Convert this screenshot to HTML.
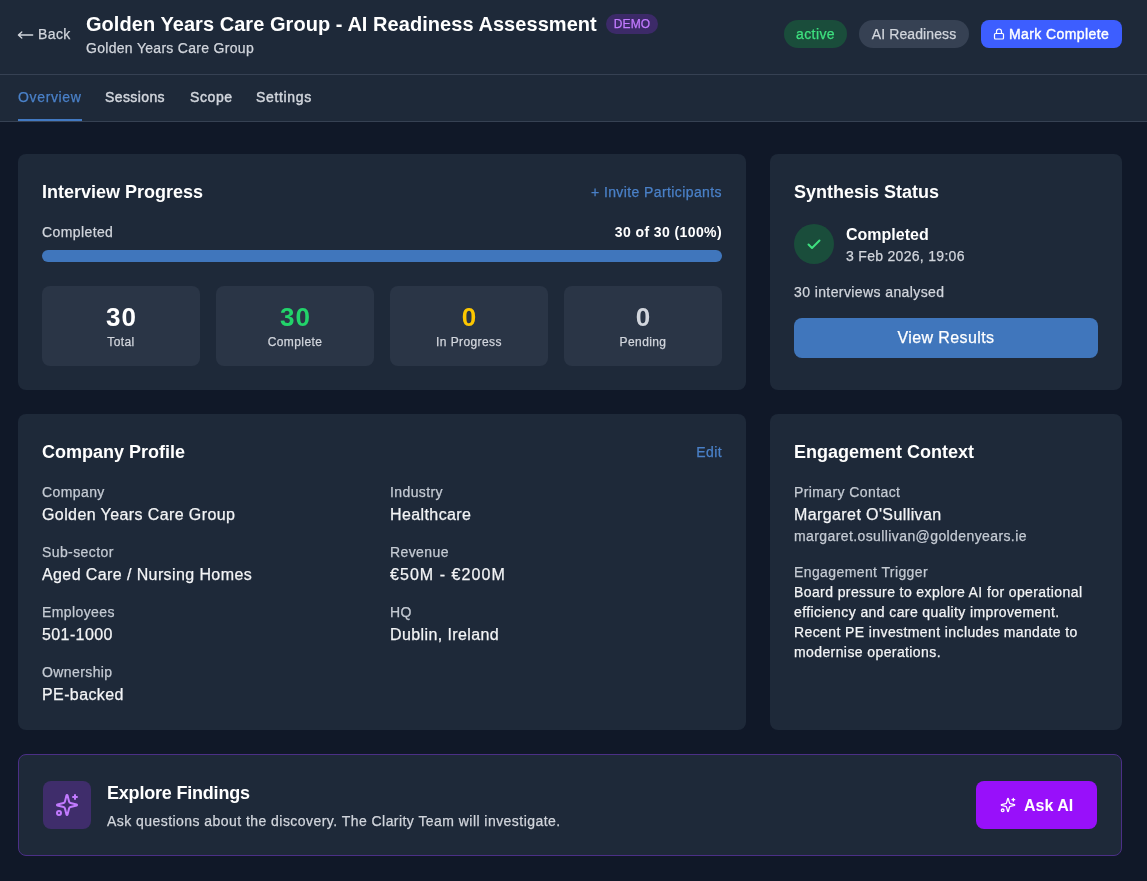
<!DOCTYPE html>
<html><head><meta charset="utf-8">
<style>
*{box-sizing:border-box;margin:0;padding:0}
html,body{width:1147px;height:881px;overflow:hidden;background:#101828;font-family:"Liberation Sans",sans-serif;color:#fff;letter-spacing:0.4px}
.b{font-weight:bold;letter-spacing:0}
.b0{-webkit-text-stroke-width:0}
.abs{position:absolute}
.hdr{position:absolute;left:0;top:0;width:1147px;height:75px;background:#1e2939;border-bottom:1px solid #364153}
.tabs{position:absolute;left:0;top:75px;width:1147px;height:47px;background:#1e2939;border-bottom:1px solid #364153}
.t{position:absolute;white-space:nowrap}
.card{position:absolute;background:#1e2939;border-radius:8px}
.stat{position:absolute;top:286px;width:158px;height:80px;background:#2a3546;border-radius:8px;text-align:center}
.stat .n{position:absolute;left:0;right:0;top:15px;font-size:26px;line-height:32px;font-weight:bold;letter-spacing:1px;text-indent:1px;-webkit-text-stroke-width:0}
.stat .l{position:absolute;left:0;right:0;top:48px;font-size:12px;line-height:16px;color:#d1d5dc}
.h2{font-size:18px;line-height:28px;font-weight:bold;color:#fff;letter-spacing:0}
.lab{font-size:14px;line-height:20px;color:#c4cad3}
.val{font-size:16px;line-height:24px;color:#f3f4f6}
body{filter:grayscale(0.001)}
body{-webkit-text-stroke-width:0.25px}
.h2{-webkit-text-stroke-width:0}
</style></head><body>
<div class="hdr">
  <svg class="abs" style="left:17px;top:30px" width="18" height="10" viewBox="0 0 18 10"><path d="M1.6 5H15.7M4.8 1.9L1.4 5l3.4 3.1" fill="none" stroke="#d1d5dc" stroke-width="1.3" stroke-linecap="round" stroke-linejoin="round"/></svg>
  <div class="t" style="left:38px;top:24px;font-size:14px;line-height:20px;color:#d1d5dc">Back</div>
  <div class="t" style="left:86px;top:10px;font-size:20px;line-height:28px;font-weight:bold;letter-spacing:0.05px;-webkit-text-stroke-width:0">Golden Years Care Group - AI Readiness Assessment</div>
  <div class="abs" style="left:606px;top:14px;width:52px;height:20px;border-radius:10px;background:#3c2a68;color:#c27aff;font-size:12px;line-height:20px;text-align:center;letter-spacing:0.1px">DEMO</div>
  <div class="t" style="left:86px;top:38px;font-size:14px;line-height:20px;color:#d1d5dc;letter-spacing:0.3px">Golden Years Care Group</div>
  <div class="abs" style="left:784px;top:20px;width:63px;height:28px;border-radius:14px;background:#1a4d3b;color:#3ee07f;font-size:14px;line-height:28px;text-align:center">active</div>
  <div class="abs" style="left:859px;top:20px;width:110px;height:28px;border-radius:14px;background:#364153;color:#d1d5dc;font-size:14px;line-height:28px;text-align:center;letter-spacing:0.1px">AI Readiness</div>
  <div class="abs" style="left:981px;top:20px;width:141px;height:28px;border-radius:8px;background:#3d5eff;color:#fff;font-size:14px;line-height:28px;text-align:center">
    <svg style="position:absolute;left:12px;top:8px" width="12" height="12" viewBox="0 0 12 12"><rect x="1.5" y="5.5" width="9" height="5.5" rx="1" fill="none" stroke="#fff" stroke-width="1.2"/><path d="M3.5 5.5V3.5a2.5 2.5 0 0 1 5 0v2" fill="none" stroke="#fff" stroke-width="1.2"/></svg>
    <span style="position:absolute;left:28px;top:0;-webkit-text-stroke-width:0.4px;letter-spacing:0.4px">Mark Complete</span>
  </div>
</div>
<div class="tabs">
  <div class="t" style="left:18px;top:12px;font-size:14px;line-height:20px;color:#4a80c8;letter-spacing:0.65px">Overview</div>
  <div class="abs" style="left:18px;top:44px;width:64px;height:2px;background:#4279c2"></div>
  <div class="t" style="left:105px;top:12px;font-size:14px;line-height:20px;color:#d1d5dc;-webkit-text-stroke-width:0.45px">Sessions</div>
  <div class="t" style="left:190px;top:12px;font-size:14px;line-height:20px;color:#d1d5dc;-webkit-text-stroke-width:0.45px;letter-spacing:0.6px">Scope</div>
  <div class="t" style="left:256px;top:12px;font-size:14px;line-height:20px;color:#d1d5dc;-webkit-text-stroke-width:0.45px;letter-spacing:0.65px">Settings</div>
</div>

<!-- Interview progress -->
<div class="card" style="left:18px;top:154px;width:728px;height:236px"></div>
<div class="t h2" style="left:42px;top:178px">Interview Progress</div>
<div class="t" style="right:425px;top:182px;font-size:14px;line-height:20px;color:#4a80c8">+ Invite Participants</div>
<div class="t" style="left:42px;top:222px;font-size:14px;line-height:20px;color:#d1d5dc">Completed</div>
<div class="t" style="right:425px;top:222px;font-size:14px;line-height:20px;color:#fff;font-weight:bold;letter-spacing:0.4px;-webkit-text-stroke-width:0">30 of 30 (100%)</div>
<div class="abs" style="left:42px;top:250px;width:680px;height:12px;border-radius:6px;background:#4076bc"></div>
<div class="stat" style="left:42px"><div class="n">30</div><div class="l">Total</div></div>
<div class="stat" style="left:216px"><div class="n" style="color:#22d36a">30</div><div class="l">Complete</div></div>
<div class="stat" style="left:390px"><div class="n" style="color:#fdc700">0</div><div class="l">In Progress</div></div>
<div class="stat" style="left:564px"><div class="n" style="color:#d1d5dc">0</div><div class="l">Pending</div></div>

<!-- Synthesis -->
<div class="card" style="left:770px;top:154px;width:352px;height:236px"></div>
<div class="t h2" style="left:794px;top:178px">Synthesis Status</div>
<div class="abs" style="left:794px;top:224px;width:40px;height:40px;border-radius:20px;background:#1a4d3b"></div>
<svg class="abs" style="left:806px;top:236px" width="16" height="16" viewBox="0 0 16 16"><path d="M2.5 8.5l3.5 3.5 7.5-7.5" fill="none" stroke="#3ee07f" stroke-width="2" stroke-linecap="round" stroke-linejoin="round"/></svg>
<div class="t" style="left:846px;top:223px;font-size:16px;line-height:24px;font-weight:bold;letter-spacing:0;-webkit-text-stroke-width:0">Completed</div>
<div class="t" style="left:846px;top:246px;font-size:14px;line-height:20px;color:#d1d5dc;letter-spacing:0.3px">3 Feb 2026, 19:06</div>
<div class="t" style="left:794px;top:282px;font-size:14px;line-height:20px;color:#d1d5dc">30 interviews analysed</div>
<div class="abs" style="left:794px;top:318px;width:304px;height:40px;border-radius:8px;background:#4076bc;color:#fff;font-size:16px;line-height:40px;text-align:center">View Results</div>

<!-- Company profile -->
<div class="card" style="left:18px;top:414px;width:728px;height:316px"></div>
<div class="t h2" style="left:42px;top:438px">Company Profile</div>
<div class="t" style="right:425px;top:442px;font-size:14px;line-height:20px;color:#4a80c8">Edit</div>
<div class="t lab" style="left:42px;top:482px">Company</div>
<div class="t val" style="left:42px;top:503px">Golden Years Care Group</div>
<div class="t lab" style="left:390px;top:482px">Industry</div>
<div class="t val" style="left:390px;top:503px">Healthcare</div>
<div class="t lab" style="left:42px;top:542px">Sub-sector</div>
<div class="t val" style="left:42px;top:563px">Aged Care / Nursing Homes</div>
<div class="t lab" style="left:390px;top:542px">Revenue</div>
<div class="t val" style="left:390px;top:563px;letter-spacing:1.05px">&euro;50M - &euro;200M</div>
<div class="t lab" style="left:42px;top:602px">Employees</div>
<div class="t val" style="left:42px;top:623px">501-1000</div>
<div class="t lab" style="left:390px;top:602px">HQ</div>
<div class="t val" style="left:390px;top:623px">Dublin, Ireland</div>
<div class="t lab" style="left:42px;top:662px">Ownership</div>
<div class="t val" style="left:42px;top:683px">PE-backed</div>

<!-- Engagement -->
<div class="card" style="left:770px;top:414px;width:352px;height:316px"></div>
<div class="t h2" style="left:794px;top:438px">Engagement Context</div>
<div class="t lab" style="left:794px;top:482px">Primary Contact</div>
<div class="t val" style="left:794px;top:503px">Margaret O'Sullivan</div>
<div class="t" style="left:794px;top:526px;font-size:14px;line-height:20px;color:#c4cad3">margaret.osullivan@goldenyears.ie</div>
<div class="t lab" style="left:794px;top:562px">Engagement Trigger</div>
<div class="t" style="left:794px;top:582px;font-size:14px;line-height:20px;color:#f3f4f6">Board pressure to explore AI for operational<br>efficiency and care quality improvement.<br>Recent PE investment includes mandate to<br>modernise operations.</div>

<!-- Explore -->
<div class="card" style="left:18px;top:754px;width:1104px;height:102px;border:1px solid #4b2f86"></div>
<div class="abs" style="left:43px;top:781px;width:48px;height:48px;border-radius:8px;background:#3f2d6b"></div>
<svg class="abs" style="left:55px;top:793px" width="24" height="24" viewBox="0 0 24 24" fill="none" stroke="#c27aff" stroke-width="2" stroke-linecap="round" stroke-linejoin="round"><path d="M9.937 15.5A2 2 0 0 0 8.5 14.063l-6.135-1.582a.5.5 0 0 1 0-.962L8.5 9.936A2 2 0 0 0 9.937 8.5l1.582-6.135a.5.5 0 0 1 .963 0L14.063 8.5A2 2 0 0 0 15.5 9.937l6.135 1.581a.5.5 0 0 1 0 .964L15.5 14.063a2 2 0 0 0-1.437 1.437l-1.582 6.135a.5.5 0 0 1-.963 0z"/><path d="M20 2v4M18 4h4"/><circle cx="4" cy="20" r="2"/></svg>
<div class="t h2" style="left:107px;top:779px;letter-spacing:-0.2px">Explore Findings</div>
<div class="t" style="left:107px;top:811px;font-size:14px;line-height:20px;color:#d1d5dc;letter-spacing:0.45px">Ask questions about the discovery. The Clarity Team will investigate.</div>
<div class="abs" style="left:976px;top:781px;width:121px;height:48px;border-radius:8px;background:#9810fa;color:#fff"></div>
<svg class="abs" style="left:1000px;top:797px" width="16" height="16" viewBox="0 0 24 24" fill="none" stroke="#fff" stroke-width="2" stroke-linecap="round" stroke-linejoin="round"><path d="M9.937 15.5A2 2 0 0 0 8.5 14.063l-6.135-1.582a.5.5 0 0 1 0-.962L8.5 9.936A2 2 0 0 0 9.937 8.5l1.582-6.135a.5.5 0 0 1 .963 0L14.063 8.5A2 2 0 0 0 15.5 9.937l6.135 1.581a.5.5 0 0 1 0 .964L15.5 14.063a2 2 0 0 0-1.437 1.437l-1.582 6.135a.5.5 0 0 1-.963 0z"/><path d="M20 2v4M18 4h4"/><circle cx="4" cy="20" r="2"/></svg>
<div class="t" style="left:1024px;top:794px;font-size:16px;line-height:24px;font-weight:bold;letter-spacing:0;-webkit-text-stroke-width:0">Ask AI</div>
</body></html>
